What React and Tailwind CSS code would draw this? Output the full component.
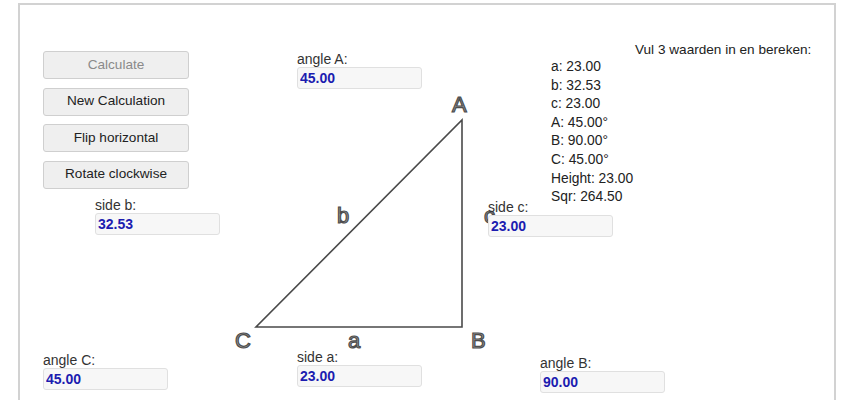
import React from "react";

const buttons = [
  { label: "Calculate", disabled: true },
  { label: "New Calculation" },
  { label: "Flip horizontal" },
  { label: "Rotate clockwise" },
];

// fields sit next to the corners / sides of the triangle
const fields = [
  { id: "angleA", label: "angle A:", value: "45.00", pos: "left-[277px] top-[47px]" },
  { id: "sideB", label: "side b:", value: "32.53", pos: "left-[75px] top-[193px]" },
  { id: "sideC", label: "side c:", value: "23.00", pos: "left-[468px] top-[195px]" },
  { id: "angleC", label: "angle C:", value: "45.00", pos: "left-[23px] top-[348px]" },
  { id: "sideA", label: "side a:", value: "23.00", pos: "left-[277px] top-[345px]" },
  { id: "angleB", label: "angle B:", value: "90.00", pos: "left-[520px] top-[351px]" },
];

const letters = [
  { t: "A", pos: "left-[432px] top-[89px]" },
  { t: "C", pos: "left-[215px] top-[325px]" },
  { t: "B", pos: "left-[451px] top-[325px]" },
  { t: "b", pos: "left-[317px] top-[200px]" },
  { t: "a", pos: "left-[328px] top-[325px]" },
  { t: "c", pos: "left-[464px] top-[200px]" },
];

const results = [
  "a: 23.00",
  "b: 32.53",
  "c: 23.00",
  "A: 45.00°",
  "B: 90.00°",
  "C: 45.00°",
  "Height: 23.00",
  "Sqr: 264.50",
];

const Field = ({ label, value, pos }) => (
  <div className={`absolute ${pos} flex flex-col`}>
    <span className="text-[14px] leading-[15px] text-[#333]">{label}</span>
    <input
      readOnly
      value={value}
      className="w-[125px] h-[22px] px-[2px] bg-[#f7f7f7] border border-[#e0e0e0] rounded-[3px] text-[14px] font-bold text-[#1c1cb0] outline-none"
    />
  </div>
);

export default function App() {
  return (
    <div className="w-full h-[400px] overflow-hidden bg-white font-['Liberation_Sans',Arial,sans-serif]">
      <div className="ml-[18px] mt-[3px] w-[818px] h-[420px] border-2 border-[#d2d2d2] border-b-0">
        <div className="relative w-full h-full">
          <div className="absolute left-[23px] top-[46px] flex flex-col gap-[8.5px]">
            {buttons.map((b) => (
              <button
                key={b.label}
                disabled={b.disabled}
                className={`w-[146px] h-[28px] bg-[#efefef] border border-[#cfcfcf] rounded-[3px] text-[13.6px] ${
                  b.disabled ? "text-[#8a8a8a]" : "text-[#222]"
                }`}
              >
                {b.label}
              </button>
            ))}
          </div>

          <svg className="absolute left-0 top-0 pointer-events-none" width="818" height="420">
            <polygon
              points="442,115 442,322 236,322"
              fill="none"
              stroke="#4a4a4a"
              strokeWidth="1.6"
            />
          </svg>

          {letters.map((l) => (
            <span
              key={l.t}
              className={`absolute ${l.pos} text-[22px] leading-[22px] text-[#999] [-webkit-text-stroke:1.2px_#4d4d4d]`}
            >
              {l.t}
            </span>
          ))}

          {fields.map((f) => (
            <Field key={f.id} {...f} />
          ))}

          <div className="absolute left-[615px] top-[36px] text-[13.6px] leading-[18.5px] text-[#222]">
            Vul 3 waarden in en bereken:
          </div>
          <div className="absolute left-[531px] top-[53px] flex flex-col text-[13.8px] leading-[18.6px] text-[#222]">
            {results.map((r) => (
              <span key={r}>{r}</span>
            ))}
          </div>
        </div>
      </div>
    </div>
  );
}
